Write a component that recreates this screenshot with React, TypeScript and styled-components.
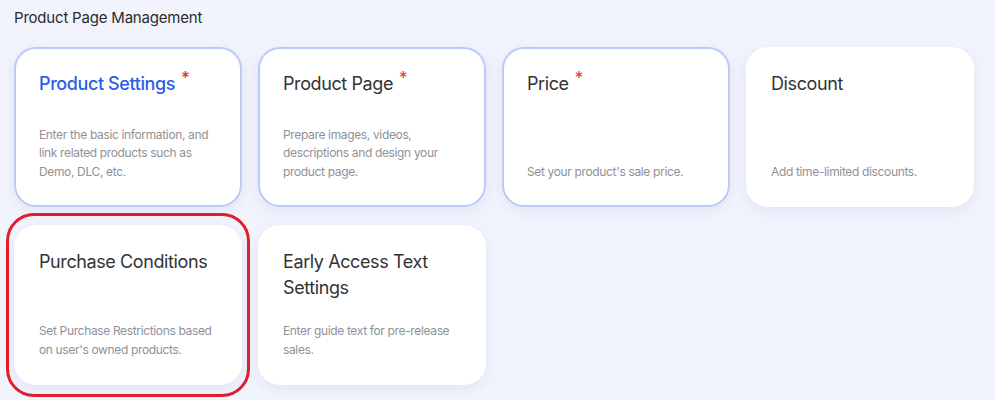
import styled, { createGlobalStyle } from 'styled-components'

const GlobalStyle = createGlobalStyle`
  html, body {
    margin: 0;
    padding: 0;
    background: #f2f4fd;
    font-family: Inter, "Noto Sans", sans-serif;
  }
`

const Page = styled.div`
  padding: 8px 14px 0 14px;
  width: 995px;
  height: 400px;
  box-sizing: border-box;
  overflow: hidden;
`

const Heading = styled.h2`
  margin: 0 0 19px 0;
  font-size: 15px;
  font-weight: 400;
  color: #2b2b2b;
  line-height: 20px;
  letter-spacing: -0.2px;
`

const Grid = styled.div`
  display: grid;
  grid-template-columns: repeat(4, 228px);
  grid-auto-rows: 160px;
  column-gap: 16px;
  row-gap: 18px;
`

const Slot = styled.div<{ $focused?: boolean }>`
  position: relative;
  ${({ $focused }) =>
    $focused &&
    `
    &::after {
      content: '';
      position: absolute;
      left: -8px;
      top: -12px;
      right: -8px;
      bottom: -12px;
      border: 3px solid #e11d2a;
      border-radius: 28px;
      pointer-events: none;
    }
  `}
`

const Card = styled.div<{ $required?: boolean }>`
  box-sizing: border-box;
  height: 100%;
  background: #fff;
  border-radius: 22px;
  border: 2px solid ${({ $required }) => ($required ? '#bccbf6' : 'transparent')};
  box-shadow: 0 4px 14px rgba(170, 180, 220, 0.25);
  padding: 22px 20px 24px 23px;
  display: flex;
  flex-direction: column;
  justify-content: space-between;
`

const Title = styled.div<{ $active?: boolean }>`
  font-size: 18px;
  line-height: 26px;
  font-weight: 400;
  letter-spacing: -0.4px;
  color: ${({ $active }) => ($active ? '#2b5ee6' : '#333')};
  ${({ $active }) => $active && 'font-weight: 500;'}
`

const Star = styled.span`
  position: relative;
  top: -6px;
  color: #e5303c;
  font-size: 17px;
  line-height: 0;
  margin-left: 6px;
`

const Desc = styled.div`
  font-size: 12px;
  line-height: 18.5px;
  letter-spacing: -0.35px;
  color: #8f9198;
`

type Item = {
  title: string
  desc: string
  required?: boolean
  active?: boolean
  focused?: boolean
}

const items: Item[] = [
  {
    title: 'Product Settings',
    desc: 'Enter the basic information, and link related products such as Demo, DLC, etc.',
    required: true,
    active: true,
  },
  {
    title: 'Product Page',
    desc: 'Prepare images, videos, descriptions and design your product page.',
    required: true,
  },
  { title: 'Price', desc: "Set your product's sale price.", required: true },
  { title: 'Discount', desc: 'Add time-limited discounts.' },
  {
    title: 'Purchase Conditions',
    desc: "Set Purchase Restrictions based on user's owned products.",
    focused: true,
  },
  { title: 'Early Access Text Settings', desc: 'Enter guide text for pre-release sales.' },
]

export default function App() {
  return (
    <Page>
      <GlobalStyle />
      <Heading>Product Page Management</Heading>
      <Grid>
        {items.map((it) => (
          <Slot key={it.title} $focused={it.focused}>
            <Card $required={it.required}>
              <Title $active={it.active}>
                {it.title}
                {it.required && <Star>*</Star>}
              </Title>
              <Desc>{it.desc}</Desc>
            </Card>
          </Slot>
        ))}
      </Grid>
    </Page>
  )
}
